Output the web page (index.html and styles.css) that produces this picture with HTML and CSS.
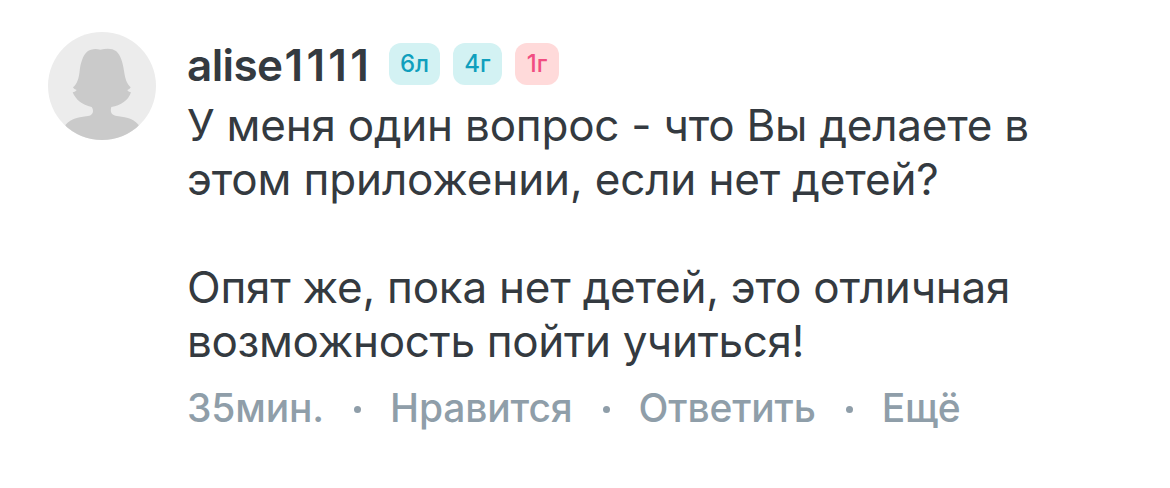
FILE: index.html
```
<!DOCTYPE html>
<html lang="ru">
<head>
  <meta charset="UTF-8" />
  <title>Комментарий</title>
  <link rel="stylesheet" href="styles.css">
</head>
<body>
<div class="comment">
  <svg class="avatar" viewBox="0 0 324 324">
    <clipPath id="round"><circle cx="162" cy="162" r="162" /></clipPath>
    <g clip-path="url(#round)">
      <rect width="324" height="324" fill="#ececec" />
      <path fill="#cacaca" d="M157 53C144 49 128 50 117 59C104 71 98 93 95 116C93 137 88 155 75 166C77 170 82 173 86 174C84 177 79 180 74 181C82 201 102 220 131 225C138 235 136 248 124 251C99 256 72 255 52 279L52 324H272V279C254 255 227 256 202 251C187 247 187 235 190 225C218 221 242 205 249 181C244 180 240 178 238 174C242 173 246 170 248 166C235 154 231 137 228 116C224 91 218 70 205 58C193 48 175 49 157 53Z" />
    </g>
  </svg>
  <div class="content">
    <div class="header">
      <span class="name">alise<span class="digits">1111</span></span>
      <span class="badge">6л</span>
      <span class="badge badge-four">4г</span>
      <span class="badge badge-girl">1г</span>
    </div>
    <div class="text">
      <p>У меня один вопрос - что Вы делаете в<br><span class="loose">этом приложении, если нет детей?</span></p>
      <p>Опят же, пока нет детей, это отличная<br><span class="tight">возможность пойти учиться!</span></p>
    </div>
    <div class="actions">
      <span>35мин.</span>
      <i class="dot"></i>
      <span>Нравится</span>
      <i class="dot"></i>
      <span>Ответить</span>
      <i class="dot"></i>
      <span>Ещё</span>
    </div>
  </div>
</div>
</body>
</html>
```

FILE: styles.css
```
* {
  margin: 0;
  padding: 0;
  box-sizing: border-box;
}
body {
  background: #fff;
  font-family: Inter, sans-serif;
  color: #343a40;
  overflow: hidden;
}
.comment {
  display: flex;
  padding: 32px 48px;
}
.avatar {
  width: 108px;
  height: 108px;
  margin-right: 31px;
  flex-shrink: 0;
}
.header {
  display: flex;
  align-items: center;
  height: 64px;
  margin-bottom: 2px;
}
.name {
  width: 202px;
  font-size: 44px;
  font-weight: 600;
  line-height: 64px;
  padding-top: 1px;
  letter-spacing: -0.6px;
}
.digits {
  margin-left: 2px;
  letter-spacing: 3.3px;
}
.badge {
  width: 51px;
  height: 42px;
  margin-right: 13px;
  border-radius: 12px;
  background: #d3f2f3;
  color: #109fbd;
  font-size: 24px;
  font-weight: 500;
  line-height: 42px;
  text-align: center;
}
.badge-four {
  width: 49px;
}
.badge-girl {
  width: 44px;
  background: #ffdada;
  color: #f14d81;
}
.text {
  font-size: 44px;
  line-height: 54px;
  letter-spacing: -0.23px;
  white-space: nowrap;
}
.text p {
  margin-bottom: 54px;
}
.text p:last-child {
  margin-bottom: 0;
}
.loose {
  letter-spacing: -0.15px;
}
.tight {
  letter-spacing: -0.32px;
}
.actions {
  display: flex;
  align-items: center;
  height: 54px;
  margin-top: 12px;
  color: #8f9ea9;
  font-size: 39px;
  font-weight: 500;
  letter-spacing: -0.15px;
  white-space: nowrap;
}
.dot {
  width: 7px;
  height: 7px;
  margin: 5px 29px 0 30px;
  border-radius: 50%;
  background: #8f9ea9;
}
```
